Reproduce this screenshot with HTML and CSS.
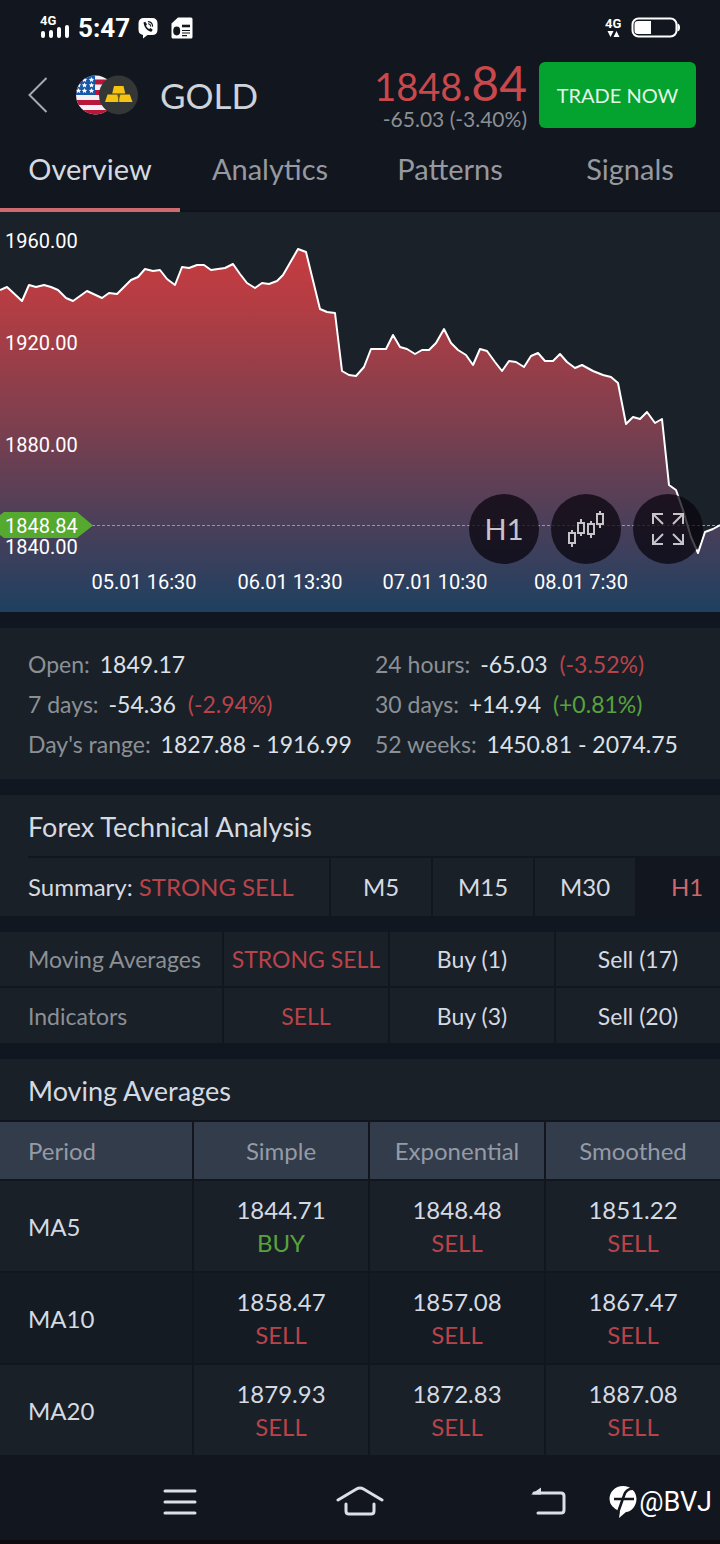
FILE: index.html
```html
<!DOCTYPE html>
<html lang="en">
<head>
  <meta charset="UTF-8">
  <meta name="viewport" content="width=device-width, initial-scale=1">
  <title>GOLD - Overview</title>
  <link rel="stylesheet" href="styles.css">
</head>
<body>
  <div class="status-bar">
    <div class="status-left">
      <svg class="icon-signal" viewBox="0 0 30 30" width="30" height="30">
        <text x="0" y="12" class="signal-text">4G</text>
        <path d="M3 20v3M11 19v4M19 16v7M27 14v9" stroke="#fff" stroke-width="4" stroke-linecap="round"/>
      </svg>
      <span class="clock">5:47</span>
      <svg viewBox="0 0 20 22" width="20" height="22">
        <path fill="#fff" d="M6 1h8q5.500 0 5.500 5.500v6q0 5.500-5.500 5.500H9.500L5 21.500V18Q.5 17 .5 12.500v-6Q.5 1 6 1z"/>
        <path fill="#12161e" d="M5.500 5.500l1.700-.8 1.800 2.500-1 1.500q1.200 2.500 3.200 3.300l1.300-1 2.200 1.700-1 1.800q-1.500.6-4-1.200Q6.200 10.500 5.500 5.500z"/>
        <path fill="none" stroke="#12161e" stroke-width="1.100" stroke-linecap="round" d="M10.300 4.600q4 .5 4.300 4.600M10.500 6.800q2 .4 2.200 2.400"/>
      </svg>
      <svg class="icon-sim" viewBox="0 0 22 22" width="22" height="22">
        <path fill="#fff" d="M7 .5h13q1.500 0 1.500 1.500v18q0 1.500-1.500 1.500H2Q.5 21.500.5 20V6.500z"/>
        <ellipse cx="5.700" cy="14" rx="3.500" ry="4.400" fill="#12161e"/>
        <path d="M11 9h8" stroke="#12161e" stroke-width="2.600"/>
        <path d="M11 13.500h8M11 16h8M11 18.700h5" stroke="#12161e" stroke-width="1.200"/>
      </svg>
    </div>
    <div class="status-right">
      <svg viewBox="0 0 18 22" width="18" height="22">
        <text x="0" y="11" class="signal-text">4G</text>
        <path fill="#fff" d="M2.500 14h6l-3 6zM8.500 20h6l-3-6z"/>
      </svg>
      <svg viewBox="0 0 50 22" width="50" height="22">
        <rect x="1.500" y="1.500" width="44" height="18" rx="6" fill="none" stroke="#fff" stroke-width="2"/>
        <path fill="#fff" d="M7 4h13v13H7q-3.500 0-3.500-3V7Q3.500 4 7 4zM46.500 6.500q2.500.5 2.500 4t-2.500 4z"/>
      </svg>
    </div>
  </div>

  <header class="header">
    <button class="btn-back" aria-label="Back">
      <svg viewBox="0 0 20 36" width="20" height="36">
        <path d="M18.500 1L1.500 18l17 17" fill="none" stroke="#a5a9b0" stroke-width="2"/>
      </svg>
    </button>
    <svg class="pair" viewBox="0 0 62 40" width="62" height="40">
      <defs>
        <clipPath id="flag-clip"><circle cx="19.500" cy="20" r="19.500"/></clipPath>
      </defs>
      <g clip-path="url(#flag-clip)">
        <rect width="40" height="40" fill="#f4f0f4"/>
        <path d="M0 7h40M0 17.500h40M0 27.500h40M0 37.500h40" stroke="#b8173c" stroke-width="5"/>
        <rect width="19" height="20" fill="#1858a8"/>
        <g fill="#fff">
          <path id="star" d="M15.500 2l.8 1.700 1.900.2-1.400 1.300.4 1.900-1.700-1-1.700 1 .4-1.900-1.400-1.300 1.900-.2z"/>
          <use href="#star" x="-7"/>
          <use href="#star" y="5.500"/>
          <use href="#star" x="-7" y="5.500"/>
          <use href="#star" x="-13" y="5.500"/>
          <use href="#star" y="11"/>
          <use href="#star" x="-7" y="11"/>
          <use href="#star" x="-13" y="11"/>
        </g>
      </g>
      <circle cx="42.500" cy="20" r="19.500" fill="#343736"/>
      <path fill="#f5c413" d="M38 11h9.500l1.800 7.500H36.200zM31.500 19.500h10.800V27H29zM43.200 19.500h10.600l2.700 7.500H43.200z"/>
      <path fill="#6b5a1c" d="M41 19.500h3.500l-1.700 5z"/>
    </svg>
    <h1 class="symbol">GOLD</h1>
    <div class="quote">
      <div class="price">1848.<span class="price-big">84</span></div>
      <div class="change">-65.03 (-3.40%)</div>
    </div>
    <button class="btn-trade">TRADE NOW</button>
  </header>

  <nav class="tabs">
    <a class="tab active" href="#overview">Overview</a>
    <a class="tab" href="#analytics">Analytics</a>
    <a class="tab" href="#patterns">Patterns</a>
    <a class="tab" href="#signals">Signals</a>
  </nav>

  <main id="overview">
    <section class="chart">
      <svg class="chart-svg" viewBox="0 0 720 400">
        <defs>
          <linearGradient id="area-fill" gradientUnits="userSpaceOnUse" x1="0" y1="37" x2="0" y2="400">
            <stop offset="0" stop-color="#c53c40"/>
            <stop offset="0.150" stop-color="#b43d43"/>
            <stop offset="0.500" stop-color="#7a3f4f"/>
            <stop offset="0.760" stop-color="#4a3f5a"/>
            <stop offset="1" stop-color="#1f4060"/>
          </linearGradient>
        </defs>
        <path id="area" fill="url(#area-fill)"/>
        <path d="M92 313.500H720" stroke="#7cb070" stroke-width="1" stroke-dasharray="3 2"/>
        <path id="line" fill="none" stroke="#fff" stroke-width="2" stroke-linejoin="round"/>
        <path d="M0 303l4-3h73l16 13.500L77 326H4l-4-3z" fill="#55a92f"/>
        <g class="axis">
          <text x="5" y="36">1960.00</text>
          <text x="5" y="138">1920.00</text>
          <text x="5" y="240">1880.00</text>
          <text x="5" y="321">1848.84</text>
          <text x="5" y="342">1840.00</text>
        </g>
        <g class="axis axis-x">
          <text x="144" y="377">05.01 16:30</text>
          <text x="290" y="377">06.01 13:30</text>
          <text x="435" y="377">07.01 10:30</text>
          <text x="581" y="377">08.01 7:30</text>
        </g>
      </svg>
      <div class="chart-tools">
        <button class="tool">H1</button>
        <button class="tool" aria-label="Chart type">
          <svg viewBox="0 0 40 38" width="40" height="38">
            <path fill="none" stroke="#c6c3c9" stroke-width="2" d="M3 23h6v10H3zM6 20v3M6 33v4M12 13h6v10h-6zM15 9v4M15 23v3M22 14h6v10h-6zM25 11v3M25 24v4M31 4h6v10h-6zM34 1v3M34 14v4"/>
          </svg>
        </button>
        <button class="tool" aria-label="Full screen">
          <svg viewBox="0 0 32 32" width="32" height="32">
            <path fill="none" stroke="#c6c3c9" stroke-width="2" d="M1 11V1h10M1 1l10 10M21 1h10v10M31 1L21 11M1 21v10h10M1 31l10-10M31 21v10H21M31 31L21 21"/>
          </svg>
        </button>
      </div>
    </section>

    <section class="panel stats">
      <div>Open: <b>1849.17</b></div>
      <div>24 hours: <b>-65.03</b> <i class="red">(-3.52%)</i></div>
      <div>7 days: <b>-54.36</b> <i class="red">(-2.94%)</i></div>
      <div>30 days: <b>+14.94</b> <i class="green">(+0.81%)</i></div>
      <div>Day's range: <b>1827.88 - 1916.99</b></div>
      <div>52 weeks: <b>1450.81 - 2074.75</b></div>
    </section>

    <section class="panel">
      <h2 class="panel-title">Forex Technical Analysis</h2>
      <div class="timeframes">
        <div class="summary">Summary: <span class="red">STRONG SELL</span></div>
        <button class="frame">M5</button>
        <button class="frame">M15</button>
        <button class="frame">M30</button>
        <button class="frame active">H1</button>
      </div>
    </section>

    <table class="panel analysis">
      <tr>
        <th>Moving Averages</th>
        <td class="red">STRONG SELL</td>
        <td>Buy (1)</td>
        <td>Sell (17)</td>
      </tr>
      <tr>
        <th>Indicators</th>
        <td class="red">SELL</td>
        <td>Buy (3)</td>
        <td>Sell (20)</td>
      </tr>
    </table>

    <section class="panel">
      <h2 class="panel-title">Moving Averages</h2>
      <table class="averages">
        <thead>
          <tr>
            <th>Period</th>
            <th>Simple</th>
            <th>Exponential</th>
            <th>Smoothed</th>
          </tr>
        </thead>
        <tbody>
          <tr>
            <th>MA5</th>
            <td>1844.71<br><span class="green">BUY</span></td>
            <td>1848.48<br><span class="red">SELL</span></td>
            <td>1851.22<br><span class="red">SELL</span></td>
          </tr>
          <tr>
            <th>MA10</th>
            <td>1858.47<br><span class="red">SELL</span></td>
            <td>1857.08<br><span class="red">SELL</span></td>
            <td>1867.47<br><span class="red">SELL</span></td>
          </tr>
          <tr>
            <th>MA20</th>
            <td>1879.93<br><span class="red">SELL</span></td>
            <td>1872.83<br><span class="red">SELL</span></td>
            <td>1887.08<br><span class="red">SELL</span></td>
          </tr>
        </tbody>
      </table>
    </section>
  </main>

  <footer class="nav-bar">
    <button aria-label="Recent apps">
      <svg viewBox="0 0 48 32" width="48" height="32">
        <path d="M9 5h30M9 16h30M9 27h30" stroke="#dcdfe8" stroke-width="3" stroke-linecap="round"/>
      </svg>
    </button>
    <button aria-label="Home">
      <svg viewBox="0 0 48 32" width="48" height="32">
        <path d="M2 14L20.500 3q3.500-2 7 0L46 14M10 18v7q0 3 3 3h22q3 0 3-3v-7" fill="none" stroke="#dcdfe8" stroke-width="3" stroke-linecap="round"/>
      </svg>
    </button>
    <button aria-label="Back">
      <svg viewBox="0 0 52 32" width="52" height="32">
        <path d="M20 7h27q3 0 3 3v14q0 3-3 3H24" fill="none" stroke="#dcdfe8" stroke-width="3" stroke-linecap="round"/>
        <path d="M17 8.500L27 1.500v7z" fill="#dcdfe8"/>
      </svg>
    </button>
    <div class="watermark">
      <svg viewBox="0 0 28 34" width="28" height="34">
        <path fill="#fff" d="M14 1C22 1 27.500 7 27.500 14S22 27 17 27l-7 6 1-6.500Q.5 22 .5 14C.5 7 6 1 14 1z"/>
        <path fill="none" stroke="#12161e" stroke-width="2.600" d="M26 4q-8.500-1.500-11 6.500L9.500 26M5 14h20"/>
      </svg>
      <span>@BVJ</span>
    </div>
  </footer>

  <script>
    // price line, [x, y] on the 720x400 chart
    const points = [
      [0, 78], [7, 75], [22, 89], [29, 73], [36, 75], [44, 73], [51, 75], [58, 78],
      [66, 86], [73, 89], [87, 79], [102, 86], [109, 81], [117, 82], [131, 68], [138, 65],
      [145, 57], [153, 59], [160, 58], [167, 67], [175, 73], [182, 55], [189, 56], [197, 53],
      [204, 53], [211, 58], [225, 56], [233, 52], [240, 62], [247, 71], [255, 76], [262, 71],
      [269, 72], [277, 69], [283, 63], [298, 37], [306, 40], [320, 97], [327, 100], [335, 101],
      [342, 159], [349, 163], [356, 164], [364, 155], [371, 137], [386, 137], [393, 123], [400, 135],
      [407, 137], [415, 142], [422, 138], [429, 138], [436, 131], [444, 117], [451, 131], [458, 138],
      [466, 143], [473, 153], [480, 137], [487, 139], [495, 150], [502, 159], [509, 149], [516, 150],
      [524, 155], [531, 144], [538, 141], [545, 149], [553, 149], [560, 142], [567, 150], [575, 156],
      [582, 153], [593, 159], [603, 163], [611, 165], [618, 171], [626, 212], [633, 205], [640, 207],
      [647, 200], [655, 211], [662, 207], [669, 273], [676, 278], [683, 298], [691, 325], [698, 341],
      [705, 320], [713, 317], [720, 313]
    ];
    const line = 'M' + points.join('L');

    document.getElementById('line').setAttribute('d', line);
    document.getElementById('area').setAttribute('d', line + 'V400H0z');
  </script>
</body>
</html>
```
FILE: styles.css
```css
* {
  box-sizing: border-box;
}
body {
  margin: 0;
  background-color: #101720;
  color: #d5dae2;
  font-family: Lato, "Open Sans", sans-serif;
  font-size: 24px;
  line-height: 32px;
}
svg {
  display: block;
}
button {
  padding: 0;
  border: 0;
  background: none;
  color: inherit;
  font: inherit;
}
h1, h2, th {
  font-weight: 400;
}
.red {
  color: #b9434a;
}
.green {
  color: #58a23d;
}

/* status bar */
.status-bar {
  display: flex;
  justify-content: space-between;
  height: 56px;
  padding: 0 39px 0 40px;
  background-color: #12161e;
  font-family: Roboto, sans-serif;
}
.status-left,
.status-right {
  display: flex;
  align-items: center;
  gap: 8px;
}
.signal-text {
  fill: #fff;
  font-family: Roboto, sans-serif;
  font-size: 13px;
  font-weight: 700;
}
.clock {
  color: #fff;
  font-size: 26px;
  font-weight: 700;
}
.icon-sim {
  margin-left: 5px;
}

/* header */
.header {
  display: flex;
  align-items: center;
  height: 78px;
  padding: 0 24px 0 28px;
  background-color: #12161e;
}
.pair {
  margin-left: 28px;
}
.symbol {
  margin: 0 0 0 22px;
  font-size: 35px;
  color: #ced2da;
}
.quote {
  margin-left: auto;
  text-align: right;
}
.price {
  height: 48px;
  font-size: 38px;
  line-height: 50px;
  color: #c9484b;
}
.price-big {
  font-size: 48px;
}
.change {
  font-size: 21px;
  line-height: 26px;
  color: #8b8f96;
}
.btn-trade {
  width: 157px;
  height: 66px;
  margin-left: 12px;
  border-radius: 6px;
  background-color: #04a22e;
  color: #e2f6e6;
  font-size: 20px;
}

/* tabs */
.tabs {
  display: grid;
  grid-template-columns: repeat(4, 1fr);
  height: 78px;
  background-color: #12161e;
  border-bottom: 2px solid #0e131b;
}
.tab {
  height: 78px;
  padding-top: 19px;
  text-align: center;
  text-decoration: none;
  font-size: 29px;
  color: #96999f;
}
.tab.active {
  color: #d5dae2;
  border-bottom: 4px solid #cf6b6e;
}

/* chart */
.chart {
  position: relative;
  background-color: #1a2128;
}
.chart-svg {
  width: 100%;
}
.axis {
  fill: #fff;
  font-family: Roboto, sans-serif;
  font-size: 20px;
}
.axis-x {
  text-anchor: middle;
}
.chart-tools {
  position: absolute;
  right: 17px;
  bottom: 48px;
  display: flex;
  gap: 12px;
}
.tool {
  display: flex;
  align-items: center;
  justify-content: center;
  width: 70px;
  height: 70px;
  border-radius: 50%;
  background-color: rgba(10, 6, 14, 0.75);
  color: #c6c3c9;
  font-size: 29px;
}

/* panels */
.panel {
  margin-top: 16px;
  background-color: #1a2027;
}
.panel-title {
  margin: 0;
  padding: 16px 28px 13px;
  font-size: 27px;
}
.stats {
  display: grid;
  grid-template-columns: 347px 1fr;
  padding: 16px 0 15px 28px;
  font-size: 23px;
  line-height: 40px;
  white-space: nowrap;
  color: #8b9096;
}
.stats b {
  margin-left: 4px;
  font-weight: 400;
  color: #dde1e8;
}
.stats i {
  margin-left: 6px;
  font-style: normal;
}
.timeframes {
  display: flex;
  height: 60px;
  margin-left: 28px;
  overflow: hidden;
  border-top: 2px solid #12171f;
}
.summary {
  flex: 0 0 301px;
  line-height: 58px;
}
.frame {
  flex: 0 0 102px;
  border-left: 2px solid #12171f;
}
.frame.active {
  background-color: #12161e;
  color: #cf666a;
}

/* tables */
table {
  width: 100%;
  table-layout: fixed;
  border-spacing: 0;
}
td, th {
  padding: 0;
  text-align: center;
}
td, thead th + th {
  border-left: 2px solid #12171f;
}
th:first-child {
  padding-left: 28px;
  text-align: left;
}
.analysis {
  font-size: 23px;
}
.analysis th {
  width: 222px;
  color: #8b9096;
}
.analysis td,
.analysis th {
  height: 54px;
}
.analysis tr + tr td,
.analysis tr + tr th {
  height: 57px;
  border-top: 2px solid #12171f;
}
.averages th:first-child {
  width: 192px;
}
.averages thead th {
  height: 59px;
  border-top: 2px solid #10151e;
  background-color: #323c4b;
  color: #949ba6;
}
.averages td,
.averages tbody th {
  height: 92px;
  border-top: 2px solid #12171f;
  line-height: 33px;
}
.averages tbody tr:nth-child(even) {
  background-color: #141b23;
}

/* system navigation */
.nav-bar {
  position: relative;
  display: grid;
  grid-template-columns: repeat(3, 1fr);
  height: 89px;
  padding: 0 90px;
  border-bottom: 4px solid #0d0a10;
  background-color: #12161e;
}
.nav-bar button {
  display: flex;
  align-items: center;
  justify-content: center;
  padding-top: 8px;
}
.watermark {
  position: absolute;
  top: 30px;
  right: 8px;
  display: flex;
  align-items: center;
  gap: 2px;
  color: #fff;
  font-family: Roboto, sans-serif;
  font-size: 27px;
}
```
